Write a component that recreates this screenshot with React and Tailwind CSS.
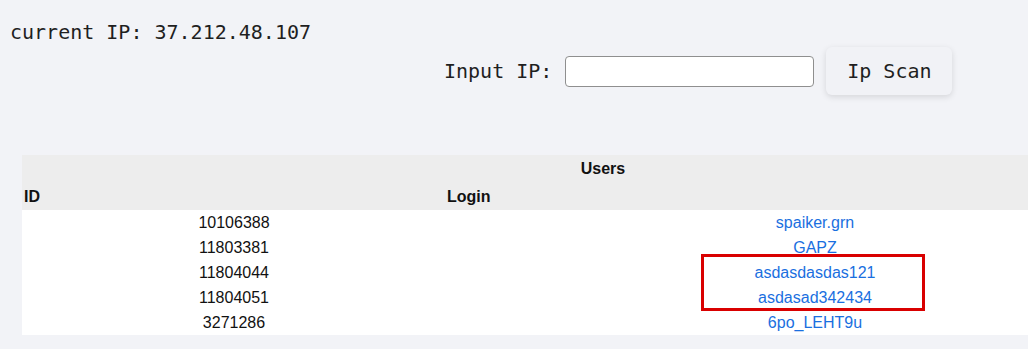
import React from 'react'

const users = [
	{ id: '10106388', login: 'spaiker.grn' },
	{ id: '11803381', login: 'GAPZ' },
	{ id: '11804044', login: 'asdasdasdas121' },
	{ id: '11804051', login: 'asdasad342434' },
	{ id: '3271286', login: '6po_LEHT9u' },
]

const mono = { fontFamily: '"DejaVu Sans Mono", "Liberation Mono", monospace' }

const App = () => {
	return (
		<div className="w-[1028px] h-[349px] overflow-hidden bg-[#f2f3f7] text-[#1f1f1f]">
			<div className="pl-[10px] pt-[20px] text-[20px] leading-[24px]" style={mono}>
				current IP: 37.212.48.107
			</div>
			<div className="flex items-center pl-[444px] mt-[3px] text-[20px]" style={mono}>
				<label className="mr-[13px]">Input IP:</label>
				<input type="text" className="w-[249px] h-[31px] bg-white border border-[#8f8f8f] rounded-[4px] outline-none" />
				<button className="ml-[12px] w-[126px] h-[48px] rounded-[6px] bg-[#f1f2f6] shadow-[0_2px_6px_rgba(0,0,0,0.12)]">
					Ip Scan
				</button>
			</div>

			<div className="relative ml-[22px] mt-[60px] w-[1162px] text-[16px] text-[#111]" style={{ fontFamily: '"Liberation Sans", Arial, sans-serif' }}>
				<div className="bg-[#ededed]">
					<div className="h-[25px] flex items-center justify-center pt-[3px] font-bold">Users</div>
					<div className="h-[30px] flex items-center pt-[3px] font-bold">
						<div className="w-[424px] pl-[2px]">ID</div>
						<div className="flex-1 pl-[1px]">Login</div>
					</div>
				</div>
				<div className="bg-white">
					{users.map((u) => (
						<div key={u.id} className="h-[25px] flex items-center">
							<div className="w-[424px] text-center">{u.id}</div>
							<div className="flex-1 text-center">
								<a href="#" className="text-[#1a6fe0]">{u.login}</a>
							</div>
						</div>
					))}
				</div>
				<div className="absolute left-[679px] top-[99px] w-[224px] h-[57px] border-[3px] border-[#d90000] pointer-events-none" />
			</div>
		</div>
	)
}

export default App
